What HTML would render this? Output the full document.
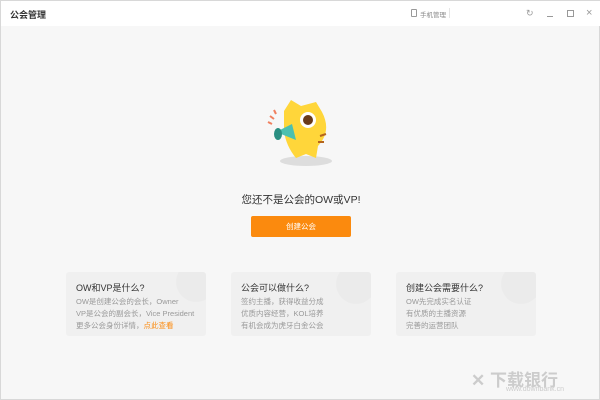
<!DOCTYPE html><html><head><meta charset="utf-8"><style>
*{margin:0;padding:0;box-sizing:border-box}
body{width:600px;height:400px;overflow:hidden;background:#f7f7f7;font-family:"Liberation Sans","Noto Sans CJK SC",sans-serif;position:relative;border:1px solid #d8d8d8}
.top{position:absolute;left:0;top:0;width:600px;height:25px;background:#fff}
.t{position:absolute;left:9px;top:7px;font-size:9px;color:#333;font-weight:bold}
.card{position:absolute;top:271px;width:140px;height:64px;background:#f0f0f0;border-radius:3px;overflow:hidden}
.card h4{position:absolute;left:10px;top:9px;font-size:9px;font-weight:normal;color:#333}
.card p{position:absolute;left:10px;top:24px;font-size:7.5px;line-height:12px;color:#999;white-space:nowrap}
.circ{position:absolute;border-radius:50%;background:#ebebeb}
</style></head><body>
<div class="top"><div class="t">公会管理</div>
<div style="position:absolute;left:410px;top:8px;width:6px;height:8px;border:1px solid #999;border-radius:1px"></div>
<div style="position:absolute;left:419px;top:8px;font-size:6.5px;color:#888">手机管理</div>
<div style="position:absolute;left:448px;top:7px;width:1px;height:10px;background:#e5e5e5"></div>
<div style="position:absolute;left:525px;top:7px;font-size:9px;line-height:10px;color:#999">↻</div>
<div style="position:absolute;left:546px;top:15px;width:6px;height:1px;background:#999"></div>
<div style="position:absolute;left:566px;top:9px;width:7px;height:7px;border:1px solid #999"></div>
<div style="position:absolute;left:585px;top:6px;font-size:11px;line-height:12px;color:#999">×</div>
</div>
<svg style="position:absolute;left:265px;top:95px" width="80" height="75">
<ellipse cx="40" cy="65" rx="26" ry="5" fill="#ddd"/>
<path d="M18 15 L25 4 L35 10 L50 6 L56 16 Q66 35 52 50 L50 62 L40 58 L30 62 Q20 50 18 35Z" fill="#ffd63a"/>
<circle cx="42" cy="24" r="8" fill="#fff"/><circle cx="42" cy="24" r="5" fill="#6a3b1a"/>
<path d="M10 36 L26 28 L30 44 Z" fill="#4cc0b0"/><ellipse cx="12" cy="38" rx="4" ry="6" fill="#2a8f82"/>
<path d="M2 26 L6 28 M4 20 L8 23 M8 14 L10 18" stroke="#f08060" stroke-width="2"/>
<path d="M54 40 L60 38 M52 46 L58 46" stroke="#b5651d" stroke-width="2"/>
</svg>
<div style="position:absolute;left:0;width:600px;top:191px;text-align:center;font-size:10.5px;color:#333">您还不是公会的OW或VP!</div>
<div style="position:absolute;left:250px;top:215px;width:100px;height:21px;background:#fb8a0e;border-radius:2px;color:#fff;font-size:7.5px;text-align:center;line-height:21px">创建公会</div>
<div class="card" style="left:65px"><div class="circ" style="left:110px;top:-10px;width:40px;height:40px"></div><h4>OW和VP是什么?</h4><p>OW是创建公会的会长，Owner<br>VP是公会的副会长，Vice President<br>更多公会身份详情，<span style="color:#fb8a0e">点此查看</span></p></div>
<div class="card" style="left:230px"><div class="circ" style="left:105px;top:-8px;width:40px;height:40px"></div><h4>公会可以做什么?</h4><p>签约主播，获得收益分成<br>优质内容经营，KOL培养<br>有机会成为虎牙白金公会</p></div>
<div class="card" style="left:395px"><div class="circ" style="left:105px;top:-8px;width:40px;height:40px"></div><h4>创建公会需要什么?</h4><p>OW先完成实名认证<br>有优质的主播资源<br>完善的运营团队</p></div>
<div style="position:absolute;left:470px;top:365px;font-size:17px;color:#ccc;font-weight:bold">✕ 下载银行</div>
<div style="position:absolute;left:505px;top:385px;font-size:7px;color:#ccc">www.downbank.cn</div>
</body></html>
